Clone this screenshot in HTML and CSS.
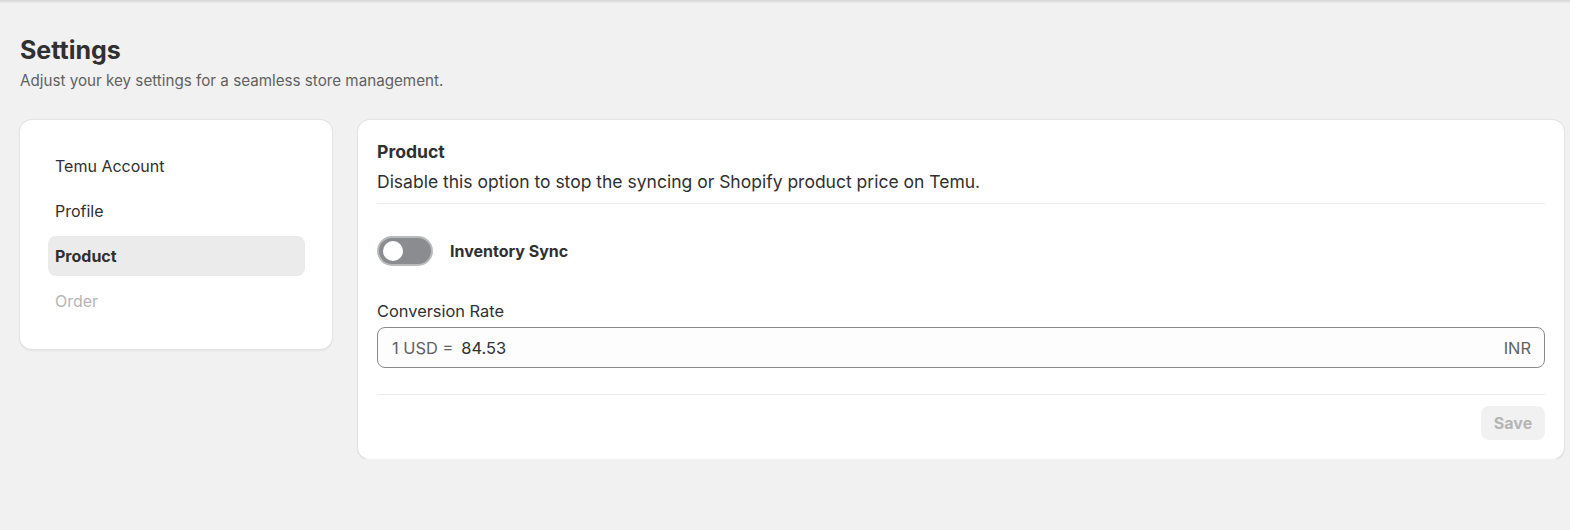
FILE: index.html
```html
<!DOCTYPE html>
<html lang="en">
<head>
    <meta charset="UTF-8">
    <meta name="viewport" content="width=device-width, initial-scale=1.0">
    <title>Settings</title>
    <link rel="stylesheet" href="styles.css">
</head>
<body>
    <div id="topbar"></div>
    <div id="page">
        <div class="page-header">
            <h1>Settings</h1>
            <p>Adjust your key settings for a seamless store management.</p>
        </div>
        <div class="layout">
            <div class="card nav-card">
                <div class="nav-item">Temu Account</div>
                <div class="nav-item">Profile</div>
                <div class="nav-item active">Product</div>
                <div class="nav-item disabled">Order</div>
            </div>
            <div class="card main-card">
                <div class="section-head">
                    <h2>Product</h2>
                    <p>Disable this option to stop the syncing or Shopify product price on Temu.</p>
                </div>
                <div class="toggle-row">
                    <span class="toggle"><span class="knob"></span></span>
                    <span class="toggle-label">Inventory Sync</span>
                </div>
                <div class="field">
                    <label for="rate">Conversion Rate</label>
                    <div class="input">
                        <span class="prefix">1 USD =</span>
                        <span class="value" id="rate">84.53</span>
                        <span class="suffix">INR</span>
                    </div>
                </div>
                <div class="card-footer">
                    <button class="save-btn" disabled>Save</button>
                </div>
            </div>
        </div>
    </div>
</body>
</html>
```

FILE: styles.css
```css
body {
    margin: 0;
    font-family: Inter, "Noto Sans", sans-serif;
    background-color: #f1f1f1;
    color: #303030;
}

#topbar {
    height: 3px;
    background: linear-gradient(#d4d4d4, #ececec);
}

#page {
    padding: 32px 6px 0 20px;
}

.page-header h1 {
    margin: 0;
    font-size: 25px;
    font-weight: 700;
    line-height: 30px;
    color: #303030;
}

.page-header p {
    margin: 6px 0 0;
    font-size: 15.2px;
    line-height: 20px;
    color: #616161;
}

.layout {
    display: flex;
    align-items: flex-start;
    gap: 26px;
    margin-top: 29px;
}

.card {
    background-color: #ffffff;
    border-radius: 12px;
    box-shadow: 0 0 0 1px #e3e3e3, 0 1px 2px rgba(0, 0, 0, 0.18);
}

.nav-card {
    width: 312px;
    box-sizing: border-box;
    padding: 26px 27px 28px 28px;
    display: flex;
    flex-direction: column;
    gap: 5px;
}

.nav-item {
    height: 40px;
    line-height: 40px;
    padding-left: 7px;
    border-radius: 8px;
    font-size: 16px;
    color: #303030;
}

.nav-item.active {
    background-color: #ebebeb;
    font-weight: 700;
}

.nav-item.disabled {
    color: #b5b5b5;
}

.main-card {
    flex: 1;
    padding: 20px 19px 19px 19px;
}

.section-head {
    padding-bottom: 9px;
    border-bottom: 1px solid #ebebeb;
}

.section-head h2 {
    margin: 0;
    font-size: 17.6px;
    font-weight: 700;
    line-height: 24px;
}

.section-head p {
    margin: 6px 0 0;
    font-size: 17.5px;
    line-height: 24px;
}

.toggle-row {
    display: flex;
    align-items: center;
    gap: 17px;
    margin-top: 32px;
}

.toggle {
    width: 56px;
    height: 30px;
    box-sizing: border-box;
    border-radius: 15px;
    background-color: #8a8c8f;
    border: 2px solid #b9babc;
    display: flex;
    align-items: center;
    padding-left: 4px;
}

.knob {
    width: 20px;
    height: 20px;
    border-radius: 50%;
    background-color: #ffffff;
}

.toggle-label {
    font-size: 16px;
    font-weight: 700;
}

.field {
    margin-top: 35px;
}

.field label {
    display: block;
    font-size: 16.4px;
    line-height: 20px;
    margin-bottom: 6px;
}

.input {
    display: flex;
    align-items: center;
    height: 41px;
    box-sizing: border-box;
    border: 1px solid #8a8a8a;
    border-radius: 8px;
    background-color: #fdfdfd;
    padding: 0 13px 0 14px;
    font-size: 16.4px;
}

.prefix {
    color: #616161;
}

.value {
    margin-left: 8px;
    flex: 1;
    color: #303030;
}

.suffix {
    color: #616161;
}

.card-footer {
    margin-top: 26px;
    padding-top: 11px;
    border-top: 1px solid #ebebeb;
    display: flex;
    justify-content: flex-end;
}

.save-btn {
    font-family: inherit;
    font-size: 16px;
    font-weight: 700;
    color: #b5b5b5;
    background-color: #f1f1f1;
    border: none;
    border-radius: 8px;
    width: 64px;
    height: 34px;
}
```
